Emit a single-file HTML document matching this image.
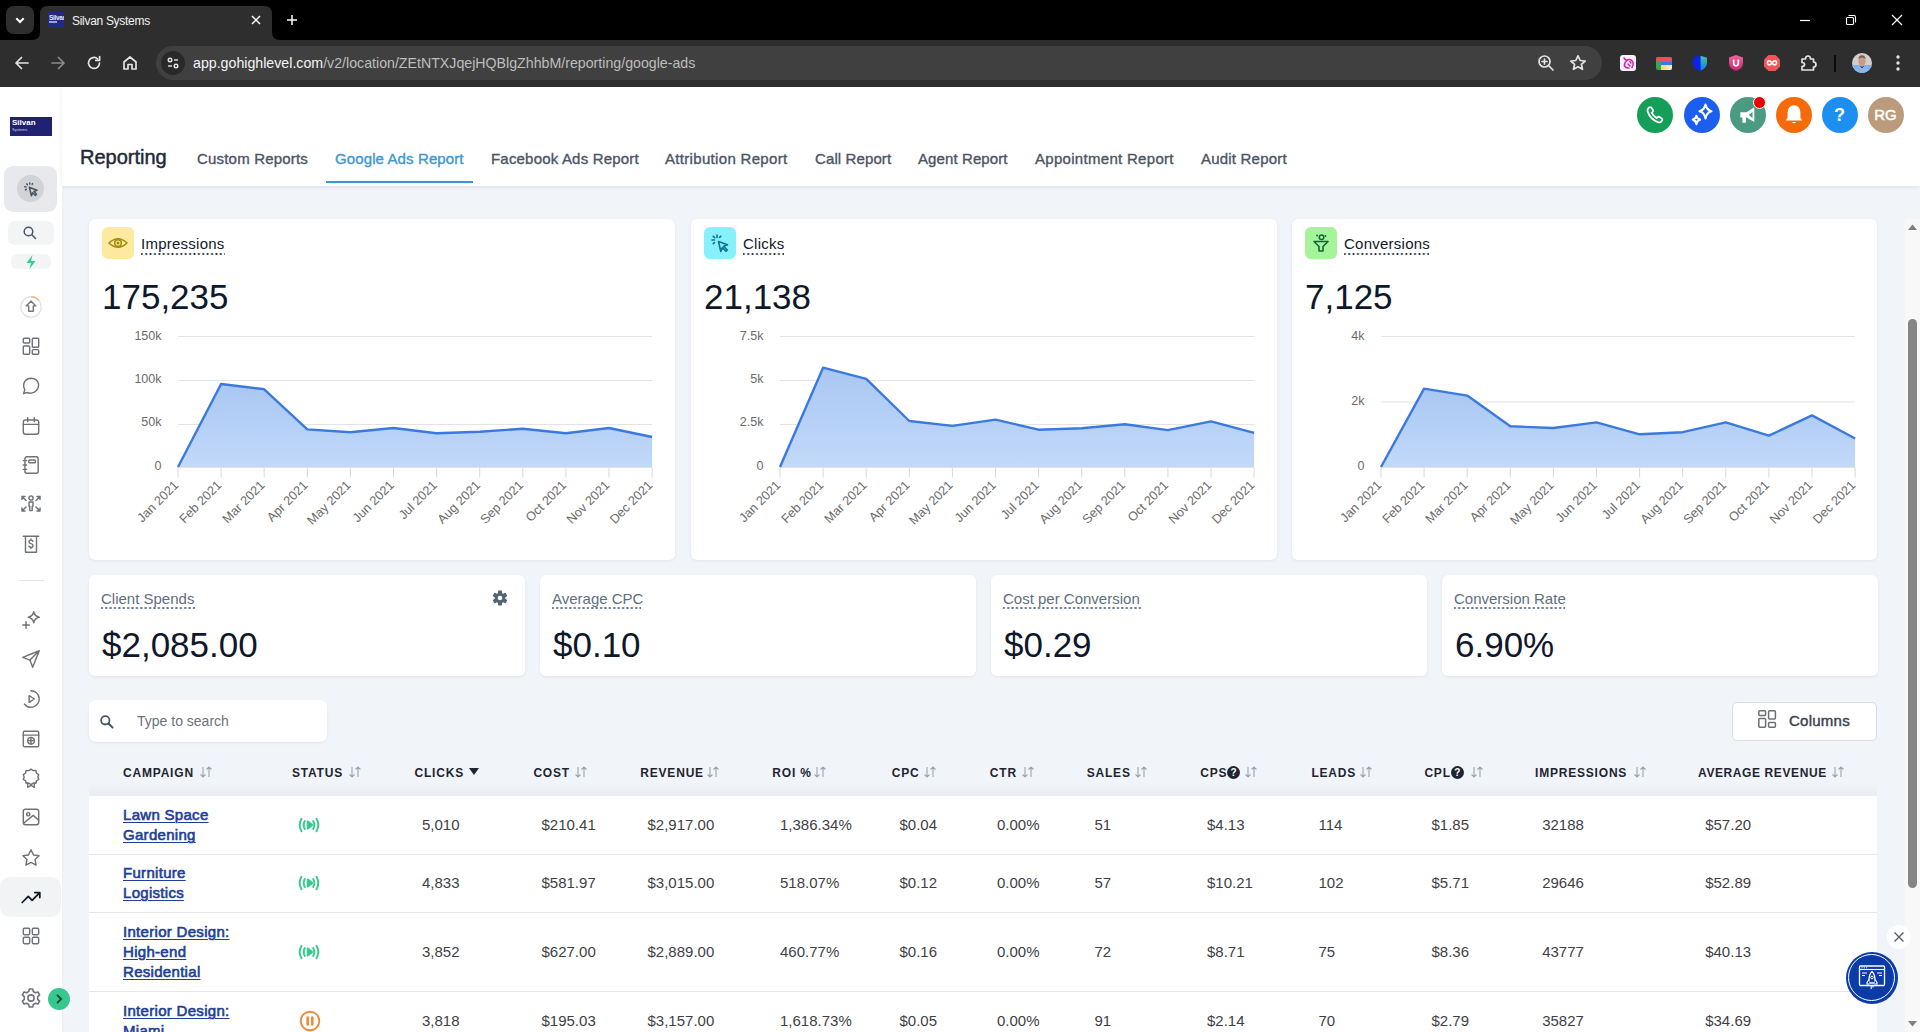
<!DOCTYPE html><html><head><meta charset="utf-8"><style>
*{box-sizing:border-box;margin:0;padding:0}
html,body{width:1920px;height:1032px;overflow:hidden;background:#f1f5f9;font-family:"Liberation Sans",sans-serif}
.a{position:absolute}
svg{display:block}
#tabs{position:absolute;left:0;top:0;width:1920px;height:40px;background:#000}
#toolbar{position:absolute;left:0;top:40px;width:1920px;height:47px;background:#2e2e2e;z-index:5}
#page{position:absolute;left:0;top:86px;width:1920px;height:946px;background:#f1f5f9;overflow:hidden}
#sidebar{position:absolute;left:0;top:0;width:63px;height:946px;background:#fff;border-right:1px solid #eef0f2}
#header{position:absolute;left:62px;top:0;width:1858px;height:100px;background:#fff;box-shadow:0 1px 4px rgba(0,0,0,.09)}
.tab{position:absolute;top:64px;font-size:15px;color:#4b5563;white-space:nowrap;line-height:18px;-webkit-text-stroke:.35px #4b5563}
.card{position:absolute;background:#fff;border-radius:6px;box-shadow:0 1px 3px rgba(16,24,40,.07)}
.ttl{position:absolute;font-size:15px;color:#111827;white-space:nowrap;line-height:18px;letter-spacing:.25px}
.dot{background-image:radial-gradient(circle,#1f2937 0 .9px,transparent 1.1px);background-size:4.4px 2px;background-position:-1.4px 0;background-repeat:repeat-x;height:2px;position:absolute}
.big{position:absolute;font-size:35px;color:#0f172a;white-space:nowrap;line-height:40px}
.hc{position:absolute;top:86px;width:36px;height:36px;border-radius:50%}
</style></head><body>
<div id="tabs">
<div class="a" style="left:6px;top:6px;width:28px;height:28px;border-radius:8px;background:#2e2e2e"></div>
<svg class="a" style="left:14px;top:14px" width="12" height="12"><path d="M2.3 4.3 L6 8 L9.7 4.3" stroke="#fff" stroke-width="2" fill="none"/></svg>
<svg class="a" style="left:32px;top:6px" width="248" height="34"><path d="M0 34 Q8 34 8 26 L8 8 Q8 0 16 0 L232 0 Q240 0 240 8 L240 26 Q240 34 248 34 Z" fill="#2e2e2e"/></svg>
<div class="a" style="left:48px;top:12px;width:16px;height:16px;background:#232a80;overflow:hidden"><div style="position:absolute;left:1px;top:2px;font-size:6.5px;font-weight:bold;color:#e8e9f5;line-height:7px;letter-spacing:-.3px">Silvan</div><div style="position:absolute;left:1px;top:9px;width:8px;height:2px;background:#9da2d6"></div></div>
<div class="a" style="left:72px;top:13px;font-size:12px;color:#f2f2f2;line-height:16px;letter-spacing:-.3px">Silvan Systems</div>
<svg class="a" style="left:250px;top:14px" width="12" height="12"><path d="M2 2 L10 10 M10 2 L2 10" stroke="#fff" stroke-width="1.5"/></svg>
<svg class="a" style="left:286px;top:14px" width="12" height="12"><path d="M6 1 V11 M1 6 H11" stroke="#fff" stroke-width="1.5"/></svg>
<svg class="a" style="left:1799px;top:14px" width="12" height="12"><path d="M1 6.5 H11" stroke="#fff" stroke-width="1.2"/></svg>
<svg class="a" style="left:1845px;top:14px" width="12" height="12"><rect x="1.5" y="3.5" width="7" height="7" rx="1" stroke="#fff" stroke-width="1.1" fill="none"/><path d="M3.5 1.5 H9 Q10.5 1.5 10.5 3 V8.5" stroke="#fff" stroke-width="1.1" fill="none"/></svg>
<svg class="a" style="left:1891px;top:14px" width="12" height="12"><path d="M1 1 L11 11 M11 1 L1 11" stroke="#fff" stroke-width="1.2"/></svg>
</div>
<div id="toolbar">
<svg class="a" style="left:12px;top:13px" width="20" height="20"><path d="M16 10 H4 M9.5 4.5 L4 10 L9.5 15.5" stroke="#e3e3e3" stroke-width="1.7" fill="none" stroke-linecap="round" stroke-linejoin="round"/></svg>
<svg class="a" style="left:48px;top:13px" width="20" height="20"><path d="M4 10 H16 M10.5 4.5 L16 10 L10.5 15.5" stroke="#8a8a8a" stroke-width="1.7" fill="none" stroke-linecap="round" stroke-linejoin="round"/></svg>
<svg class="a" style="left:84px;top:13px" width="20" height="20"><path d="M15.5 10 A5.5 5.5 0 1 1 13.6 5.8" stroke="#e3e3e3" stroke-width="1.7" fill="none" stroke-linecap="round" stroke-linejoin="round"/><path d="M15.6 3.6 V7.4 H11.8" stroke="#e3e3e3" stroke-width="1.7" fill="none" stroke-linecap="round" stroke-linejoin="round"/></svg>
<svg class="a" style="left:120px;top:13px" width="20" height="20"><path d="M4 9 L10 4 L16 9 V16 H12 V11.5 H8 V16 H4 Z" stroke="#e3e3e3" stroke-width="1.7" fill="none" stroke-linecap="round" stroke-linejoin="round"/></svg>
<div class="a" style="left:156px;top:6px;width:1446px;height:34px;border-radius:17px;background:#404040"></div>
<div class="a" style="left:161px;top:11px;width:24px;height:24px;border-radius:12px;background:#292929"></div>
<svg class="a" style="left:165px;top:15px" width="16" height="16"><circle cx="5" cy="5" r="1.8" stroke="#e3e3e3" stroke-width="1.4" fill="none"/><path d="M9 5 H13" stroke="#e3e3e3" stroke-width="1.4"/><circle cx="11" cy="11" r="1.8" stroke="#e3e3e3" stroke-width="1.4" fill="none"/><path d="M3 11 H7" stroke="#e3e3e3" stroke-width="1.4"/></svg>
<div class="a" style="left:193px;top:14px;font-size:14.2px;color:#f5f5f5;white-space:nowrap;line-height:18px">app.gohighlevel.com<span style="color:#bdbdbd">/v2/location/ZEtNTXJqejHQBlgZhhbM/reporting/google-ads</span></div>
<svg class="a" style="left:1536px;top:13px" width="20" height="20"><circle cx="8.5" cy="8.5" r="5.5" stroke="#e3e3e3" stroke-width="1.7" fill="none" stroke-linecap="round" stroke-linejoin="round"/><path d="M12.5 12.5 L17 17 M8.5 6 V11 M6 8.5 H11" stroke="#e3e3e3" stroke-width="1.7" fill="none" stroke-linecap="round" stroke-linejoin="round"/></svg>
<svg class="a" style="left:1568px;top:13px" width="20" height="20"><path d="M10 2.8 L12.2 7.5 L17.2 8 L13.4 11.3 L14.5 16.3 L10 13.7 L5.5 16.3 L6.6 11.3 L2.8 8 L7.8 7.5 Z" stroke="#e3e3e3" stroke-width="1.7" fill="none" stroke-linecap="round" stroke-linejoin="round"/></svg>
<div class="a" style="left:1620px;top:55px;"></div>
<div class="a" style="left:1620px;top:15px;width:16px;height:16px;border-radius:3px;background:#fbf0fb"></div>
<svg class="a" style="left:1620px;top:15px" width="16" height="16"><path d="M4 3 L6.5 6 Q4 8 4.5 11 Q6 13.5 9 13 M7 5 Q11 3.5 13 7 Q13.5 10 12 12.5 M8 9 L10 11 M10 6.5 L11 8" stroke="#d61fb4" stroke-width="1.5" fill="none" stroke-linecap="round"/></svg>
<div class="a" style="left:1656px;top:17px;width:16px;height:13px;border-radius:2px;overflow:hidden;background:#2fa85a"><div style="position:absolute;left:0;top:0;width:16px;height:4.5px;background:#e8505b"></div><div style="position:absolute;left:5px;top:4.5px;width:11px;height:3px;background:#3b78e7"></div><div style="position:absolute;left:5px;top:7.5px;width:11px;height:5.5px;background:linear-gradient(90deg,#f7d36b,#f2f0e6)"></div></div>
<svg class="a" style="left:1692px;top:14px" width="16" height="18"><defs><linearGradient id="shg" x1="0" y1="0" x2="0" y2="1"><stop offset="0" stop-color="#3fc99a"/><stop offset="1" stop-color="#1a7ae8"/></linearGradient></defs><path d="M8 1.5 L15 3.8 V9 Q15 14.5 8 17 Q1 14.5 1 9 V3.8 Z" fill="#0a22f0"/><path d="M8.6 1.7 L15 3.8 V9 Q15 14 8.6 16.7 Z" fill="url(#shg)"/></svg>
<svg class="a" style="left:1728px;top:14px" width="16" height="18"><defs><linearGradient id="ushg" x1="0" y1="0" x2="0" y2="1"><stop offset="0" stop-color="#e9659a"/><stop offset="1" stop-color="#d3246f"/></linearGradient></defs><path d="M8 1 L15 3.5 V9 Q15 14.5 8 17 Q1 14.5 1 9 V3.5 Z" fill="url(#ushg)"/><path d="M5.7 5.5 V9.6 Q5.7 11.8 8 11.8 Q10.3 11.8 10.3 9.6 V5.5" stroke="#fff" stroke-width="1.7" fill="none"/></svg>
<svg class="a" style="left:1763px;top:14px" width="18" height="18"><path d="M5.5 1 H12.5 L17 5.5 V12.5 L12.5 17 H5.5 L1 12.5 V5.5 Z" fill="#f05656"/><path d="M9 9 Q7 6.3 5.2 7 Q3.6 8 5.2 10.6 Q7 11.6 9 9 Q11 6.3 12.8 7 Q14.4 8 12.8 10.6 Q11 11.6 9 9" stroke="#fff" stroke-width="1.5" fill="none"/></svg>
<svg class="a" style="left:1798px;top:13px" width="20" height="20"><path d="M4 6 H7.5 Q7.5 3 10 3 Q12.5 3 12.5 6 H15.5 V9 Q18 9 18 11.5 Q18 14 15.5 14 V17 H4 V13.5 Q6.5 13.5 6.5 11.5 Q6.5 9.5 4 9.5 Z" stroke="#e3e3e3" stroke-width="1.7" fill="none" stroke-linecap="round" stroke-linejoin="round"/></svg>
<div class="a" style="left:1834px;top:15px;width:2px;height:17px;background:#0b0b0b"></div>
<svg class="a" style="left:1852px;top:13px" width="20" height="20"><defs><clipPath id="avc"><circle cx="10" cy="10" r="10"/></clipPath></defs><g clip-path="url(#avc)"><rect width="20" height="20" fill="#cfd0cc"/><rect y="12" width="20" height="8" fill="#84aee6"/><path d="M2 20 Q3 13 10 12.5 Q17 13 18 20 Z" fill="#8ab4ea"/><ellipse cx="10" cy="8.2" rx="3.6" ry="5" fill="#c99a84"/><path d="M6.4 6 Q6.6 2.3 10 2.2 Q13.4 2.3 13.6 6 Q12 4.2 10 4.4 Q8 4.2 6.4 6 Z" fill="#7a5a4a"/><path d="M8.5 13 L10 15 L11.5 13" stroke="#2a3e66" stroke-width="1" fill="none"/></g></svg>
<svg class="a" style="left:1894px;top:13px" width="8" height="20"><circle cx="4" cy="4" r="1.7" fill="#e3e3e3"/><circle cx="4" cy="10" r="1.7" fill="#e3e3e3"/><circle cx="4" cy="16" r="1.7" fill="#e3e3e3"/></svg>
</div>
<div id="page">
<div id="sidebar">
<div class="a" style="left:10px;top:31px;width:42px;height:19px;background:#1f2270"><div style="position:absolute;left:2px;top:1px;font-size:8px;font-weight:bold;color:#fff;line-height:9px">Silvan</div><div style="position:absolute;left:2px;top:10px;font-size:4px;color:#d0d3f0;line-height:5px">Systems</div></div>
<div class="a" style="left:4px;top:80px;width:53px;height:46px;border-radius:9px;background:#e8e9ec"></div>
<div class="a" style="left:17px;top:88.5px;width:27px;height:27px;border-radius:50%;background:#d2d3d6"></div>
<svg class="a" style="left:23px;top:94.5px" width="16" height="16"><path d="M6.3 6.3 L14 9.2 L10.9 10.5 L13.6 13.2 L12.3 14.5 L9.6 11.8 L8.4 14.8 Z" stroke="#4b5563" stroke-width="1.5" fill="none" stroke-linecap="round" stroke-linejoin="round" stroke-width="1.4" fill="#d2d3d6" stroke="#2e3440"/><path d="M3.8 2.8 L4.4 3.8 M1.8 5.8 L2.9 6 M2.4 8.9 L3.3 8.3 M6.8 1.9 L6.7 3 M9.5 2.6 L9.1 3.4" stroke="#4b5563" stroke-width="1.5" fill="none" stroke-linecap="round" stroke-linejoin="round" stroke-width="1.3" stroke="#2e3440"/></svg>
<div class="a" style="left:8px;top:135px;width:46px;height:24px;border-radius:7px;background:#f3f4f6"></div>
<svg class="a" style="left:22px;top:139px" width="16" height="16"><circle cx="6.5" cy="6.5" r="4.3" stroke="#4b5563" stroke-width="1.5" fill="none" stroke-linecap="round" stroke-linejoin="round" stroke-width="1.8" stroke="#374151"/><path d="M9.8 9.8 L13.5 13.5" stroke="#4b5563" stroke-width="1.5" fill="none" stroke-linecap="round" stroke-linejoin="round" stroke-width="2" stroke="#374151"/></svg>
<div class="a" style="left:11px;top:168px;width:40px;height:15px;border-radius:6px;background:#f3f4f6"></div>
<svg class="a" style="left:24px;top:168px" width="14" height="16"><path d="M8.5 1 L2.5 9 H7 L5.5 15 L11.5 7 H7 Z" fill="#2fcf8f"/></svg>
<svg class="a" style="left:19.5px;top:210.0px" width="22" height="22" viewBox="0 0 20 20"><circle cx="10" cy="10" r="9.3" stroke="#e2e3e5" stroke-width="1.2" fill="none"/><path d="M10 .7 A9.3 9.3 0 0 1 17.2 4.1" stroke="#f5b584" stroke-width="1.2" fill="none"/><path d="M10 4.5 L14.3 9 H12.1 V13.8 H7.9 V9 H5.7 Z" stroke="#777" stroke-width="1.3" fill="none" stroke-linejoin="round"/></svg>
<svg class="a" style="left:19.5px;top:249.0px" width="22" height="22" viewBox="0 0 20 20"><rect x="3" y="3" width="5.8" height="4.2" rx=".8" stroke="#6f7277" stroke-width="1.3" fill="none" stroke-linecap="round" stroke-linejoin="round"/><rect x="11.2" y="3" width="5.8" height="8.2" rx=".8" stroke="#6f7277" stroke-width="1.3" fill="none" stroke-linecap="round" stroke-linejoin="round"/><rect x="3" y="10" width="5.8" height="7.5" rx=".8" stroke="#6f7277" stroke-width="1.3" fill="none" stroke-linecap="round" stroke-linejoin="round"/><rect x="11.2" y="13.3" width="5.8" height="4.2" rx=".8" stroke="#6f7277" stroke-width="1.3" fill="none" stroke-linecap="round" stroke-linejoin="round"/></svg>
<svg class="a" style="left:19.5px;top:289.0px" width="22" height="22" viewBox="0 0 20 20"><path d="M3.2 17 L4.4 13.4 Q2.8 11 3.4 8.2 Q4.5 3.5 10 3 Q15.5 3 16.8 8 Q17.5 12.8 13 15.6 Q9.5 17.3 6.3 15.9 Z" stroke="#6f7277" stroke-width="1.3" fill="none" stroke-linecap="round" stroke-linejoin="round"/></svg>
<svg class="a" style="left:19.5px;top:329.0px" width="22" height="22" viewBox="0 0 20 20"><rect x="3" y="4.5" width="14" height="13" rx="2" stroke="#6f7277" stroke-width="1.3" fill="none" stroke-linecap="round" stroke-linejoin="round"/><path d="M3 8.5 H17 M7 2.5 V6 M13 2.5 V6" stroke="#6f7277" stroke-width="1.3" fill="none" stroke-linecap="round" stroke-linejoin="round"/></svg>
<svg class="a" style="left:19.5px;top:368.0px" width="22" height="22" viewBox="0 0 20 20"><rect x="4.5" y="2.5" width="12" height="15" rx="1.8" stroke="#6f7277" stroke-width="1.3" fill="none" stroke-linecap="round" stroke-linejoin="round"/><rect x="8" y="5.5" width="6" height="2.5" rx=".8" stroke="#6f7277" stroke-width="1.3" fill="none" stroke-linecap="round" stroke-linejoin="round"/><path d="M3 6 H6 M3 10 H6 M3 14 H6" stroke="#6f7277" stroke-width="1.3" fill="none" stroke-linecap="round" stroke-linejoin="round"/></svg>
<svg class="a" style="left:19.5px;top:407.0px" width="22" height="22" viewBox="0 0 20 20"><circle cx="10" cy="4.6" r="1.9" stroke="#6f7277" stroke-width="1.3" fill="none" stroke-linecap="round" stroke-linejoin="round"/><path d="M8.2 8.2 H11.8 V12 H11.1 V16 H8.9 V12 H8.2 Z" stroke="#6f7277" stroke-width="1.3" fill="none" stroke-linecap="round" stroke-linejoin="round"/><path d="M1.8 3.2 L5.5 6.8 M1.8 3.2 H4.6 M1.8 3.2 V6 M18.2 3.2 L14.5 6.8 M18.2 3.2 H15.4 M18.2 3.2 V6 M1.8 16.3 L5.5 12.7 M1.8 16.3 H4.6 M1.8 16.3 V13.5 M18.2 16.3 L14.5 12.7 M18.2 16.3 H15.4 M18.2 16.3 V13.5" stroke="#6f7277" stroke-width="1.3" fill="none" stroke-linecap="round" stroke-linejoin="round"/></svg>
<svg class="a" style="left:19.5px;top:447.0px" width="22" height="22" viewBox="0 0 20 20"><path d="M3 3 H17 M5 3 V17.5 H15 V3" stroke="#6f7277" stroke-width="1.3" fill="none" stroke-linecap="round" stroke-linejoin="round"/><path d="M11.8 7.5 Q11 6.5 10 6.5 Q8.2 6.5 8.2 8 Q8.2 9.3 10 9.7 Q11.8 10.2 11.8 11.5 Q11.8 13 10 13 Q8.8 13 8 12 M10 5.5 V6.5 M10 13 V14.2" stroke="#6f7277" stroke-width="1.3" fill="none" stroke-linecap="round" stroke-linejoin="round" stroke-width="1.2"/></svg>
<div class="a" style="left:18px;top:494px;width:26px;height:1px;background:#e5e7eb"></div>
<svg class="a" style="left:19.5px;top:523.0px" width="22" height="22" viewBox="0 0 20 20"><path d="M12.5 2.5 Q13.3 6.7 17.5 7.5 Q13.3 8.3 12.5 12.5 Q11.7 8.3 7.5 7.5 Q11.7 6.7 12.5 2.5 Z" stroke="#6f7277" stroke-width="1.3" fill="none" stroke-linecap="round" stroke-linejoin="round"/><path d="M5.5 11.5 V17.5 M2.5 14.5 H8.5" stroke="#6f7277" stroke-width="1.3" fill="none" stroke-linecap="round" stroke-linejoin="round"/></svg>
<svg class="a" style="left:19.5px;top:562.0px" width="22" height="22" viewBox="0 0 20 20"><path d="M17.5 2.5 L2.5 8.5 L9 11 L11.5 17.5 Z M17.5 2.5 L9 11" stroke="#6f7277" stroke-width="1.3" fill="none" stroke-linecap="round" stroke-linejoin="round"/></svg>
<svg class="a" style="left:19.5px;top:602.0px" width="22" height="22" viewBox="0 0 20 20"><path d="M10 2.5 A7.5 7.5 0 1 1 3.2 13.2" stroke="#6f7277" stroke-width="1.3" fill="none" stroke-linecap="round" stroke-linejoin="round" stroke-dasharray="30 2 2 2 2 2"/><path d="M8.3 7 L13 10 L8.3 13 Z" stroke="#6f7277" stroke-width="1.3" fill="none" stroke-linecap="round" stroke-linejoin="round"/></svg>
<svg class="a" style="left:19.5px;top:642.0px" width="22" height="22" viewBox="0 0 20 20"><rect x="3" y="3" width="14" height="14" rx="1" stroke="#6f7277" stroke-width="1.3" fill="none" stroke-linecap="round" stroke-linejoin="round"/><path d="M3 6.5 H17" stroke="#6f7277" stroke-width="1.3" fill="none" stroke-linecap="round" stroke-linejoin="round"/><circle cx="10" cy="11.5" r="3" stroke="#6f7277" stroke-width="1.3" fill="none" stroke-linecap="round" stroke-linejoin="round" stroke-width="1.2"/><path d="M7 11.5 H13 M10 8.5 V14.5" stroke="#6f7277" stroke-width="1.3" fill="none" stroke-linecap="round" stroke-linejoin="round" stroke-width="1"/></svg>
<svg class="a" style="left:19.5px;top:681.0px" width="22" height="22" viewBox="0 0 20 20"><path d="M10 2 L12 3.3 L14.4 3.2 L15 5.5 L17 6.8 L16.2 9 L17 11.2 L15 12.5 L14.4 14.8 L12 14.7 L10 16 L8 14.7 L5.6 14.8 L5 12.5 L3 11.2 L3.8 9 L3 6.8 L5 5.5 L5.6 3.2 L8 3.3 Z" stroke="#6f7277" stroke-width="1.3" fill="none" stroke-linecap="round" stroke-linejoin="round" stroke-width="1.3"/><path d="M7 14.5 V18.5 L10 16.8 L13 18.5 V14.5" stroke="#6f7277" stroke-width="1.3" fill="none" stroke-linecap="round" stroke-linejoin="round" stroke-width="1.3"/></svg>
<svg class="a" style="left:19.5px;top:720.0px" width="22" height="22" viewBox="0 0 20 20"><rect x="3" y="3" width="14" height="14" rx="2" stroke="#6f7277" stroke-width="1.3" fill="none" stroke-linecap="round" stroke-linejoin="round"/><circle cx="7.5" cy="7.5" r="1.5" stroke="#6f7277" stroke-width="1.3" fill="none" stroke-linecap="round" stroke-linejoin="round"/><path d="M3.5 15.5 L12 8.5 L17 13" stroke="#6f7277" stroke-width="1.3" fill="none" stroke-linecap="round" stroke-linejoin="round"/></svg>
<svg class="a" style="left:19.5px;top:761.0px" width="22" height="22" viewBox="0 0 20 20"><path d="M10 2.5 L12.3 7.2 L17.3 7.9 L13.7 11.4 L14.6 16.5 L10 14 L5.4 16.5 L6.3 11.4 L2.7 7.9 L7.7 7.2 Z" stroke="#6f7277" stroke-width="1.3" fill="none" stroke-linecap="round" stroke-linejoin="round"/></svg>
<div class="a" style="left:0;top:791px;width:61px;height:40px;border-radius:10px;background:#f2f3f5"></div>
<svg class="a" style="left:19.5px;top:799.5px" width="22" height="22" viewBox="0 0 20 20"><path d="M2 15 L7.5 9.5 L11 13 L18 6 M13.5 6 H18 V10.5" stroke="#111827" stroke-width="1.6" fill="none" stroke-linecap="round" stroke-linejoin="round"/></svg>
<svg class="a" style="left:19.5px;top:839.0px" width="22" height="22" viewBox="0 0 20 20"><rect x="3" y="3" width="5.8" height="5.8" rx="1" stroke="#6f7277" stroke-width="1.3" fill="none" stroke-linecap="round" stroke-linejoin="round"/><rect x="11.2" y="3" width="5.8" height="5.8" rx="1" stroke="#6f7277" stroke-width="1.3" fill="none" stroke-linecap="round" stroke-linejoin="round"/><rect x="3" y="11.2" width="5.8" height="5.8" rx="1" stroke="#6f7277" stroke-width="1.3" fill="none" stroke-linecap="round" stroke-linejoin="round"/><rect x="11.2" y="11.2" width="5.8" height="5.8" rx="1" stroke="#6f7277" stroke-width="1.3" fill="none" stroke-linecap="round" stroke-linejoin="round"/></svg>
<svg class="a" style="left:18.5px;top:899.5px" width="24" height="24" viewBox="0 0 20 20"><circle cx="10" cy="10" r="2.6" stroke="#6f7277" stroke-width="1.3" fill="none" stroke-linecap="round" stroke-linejoin="round"/><path d="M8.6 2.5 H11.4 L11.9 4.6 L13.7 5.6 L15.8 5 L17.2 7.4 L15.6 8.9 V11.1 L17.2 12.6 L15.8 15 L13.7 14.4 L11.9 15.4 L11.4 17.5 H8.6 L8.1 15.4 L6.3 14.4 L4.2 15 L2.8 12.6 L4.4 11.1 V8.9 L2.8 7.4 L4.2 5 L6.3 5.6 L8.1 4.6 Z" stroke="#6f7277" stroke-width="1.3" fill="none" stroke-linecap="round" stroke-linejoin="round" stroke-width="1.2"/></svg>
</div>
<div class="a" style="left:48.3px;top:901.7px;width:22px;height:22px;border-radius:50%;background:#38c78e"></div>
<svg class="a" style="left:53.3px;top:906.7px" width="12" height="12"><path d="M4.5 2.3 L8.2 6 L4.5 9.7" stroke="#0d4a30" stroke-width="1.8" fill="none" stroke-linecap="round"/></svg>
<div id="header">
<div class="a" style="left:18px;top:59px;font-size:20px;color:#1f2937;line-height:24px;-webkit-text-stroke:.45px #1f2937">Reporting</div>
<div class="tab" style="left:135px;letter-spacing:0.19px">Custom Reports</div>
<div class="tab" style="left:273px;letter-spacing:0.11px;color:#3a97d4;-webkit-text-stroke:.35px #3a97d4">Google Ads Report</div>
<div class="tab" style="left:429px;letter-spacing:0.19px">Facebook Ads Report</div>
<div class="tab" style="left:603px;letter-spacing:0.32px">Attribution Report</div>
<div class="tab" style="left:753px;letter-spacing:0.11px">Call Report</div>
<div class="tab" style="left:856px;letter-spacing:0.1px">Agent Report</div>
<div class="tab" style="left:973px;letter-spacing:0.3px">Appointment Report</div>
<div class="tab" style="left:1139px;letter-spacing:0.2px">Audit Report</div>
<div class="a" style="left:264px;top:95px;width:147px;height:2px;background:#3a97d4"></div>
</div>
<div class="a" style="left:1637px;top:10.5px;width:36px;height:36px;border-radius:50%;background:#159e57"><svg class="a" style="left:6px;top:6px" width="24" height="24" viewBox="0 0 20 20"><path d="M5.2 3.8 Q6.3 3 7 3.9 L8.3 5.9 Q8.7 6.7 8 7.4 L7.2 8.1 Q8.4 10.8 11.4 12.6 L12.2 11.8 Q12.9 11.2 13.7 11.7 L15.7 13 Q16.5 13.6 15.9 14.6 L15.2 15.5 Q14.2 16.6 12.4 16 Q6.2 13.6 3.9 7.2 Q3.4 5.4 4.4 4.4 Z" stroke="#fff" stroke-width="1.5" fill="none" stroke-linecap="round" stroke-linejoin="round" stroke-width="1.1"/></svg></div>
<div class="a" style="left:1683.5px;top:10.5px;width:36px;height:36px;border-radius:50%;background:#1b5ef0"><svg class="a" style="left:4px;top:4px" width="28" height="28" viewBox="0 0 20 20"><path d="M12.5 2.5 Q13.2 6.3 16.8 7.3 Q13.2 8.3 12.5 12.5 Q11.8 8.3 8.2 7.3 Q11.8 6.3 12.5 2.5 Z" stroke="#fff" stroke-width="1.5" fill="none" stroke-linecap="round" stroke-linejoin="round" stroke-width="1.2"/><path d="M6 10.5 Q6.4 12.7 8.6 13.3 Q6.4 13.9 6 16.5 Q5.6 13.9 3.4 13.3 Q5.6 12.7 6 10.5 Z" stroke="#fff" stroke-width="1.5" fill="none" stroke-linecap="round" stroke-linejoin="round" stroke-width="1.2"/></svg></div>
<div class="a" style="left:1729.5px;top:10.5px;width:36px;height:36px;border-radius:50%;background:#4a9b82"><svg class="a" style="left:4.5px;top:4px" width="28" height="28" viewBox="0 0 20 20"><path d="M4.5 8 H9 L14.5 4.5 V15 L9 11.8 H8.5 V15.5 H6 V11.8 H4.5 Z" fill="#fff"/><path d="M10.5 9.8 L13.2 7.8 V12.3 Z" fill="#4a9b82"/></svg></div>
<div class="a" style="left:1753px;top:10px;width:13px;height:13px;border-radius:50%;background:#ee0000;border:1px solid #fff"></div>
<div class="a" style="left:1775.5px;top:10.5px;width:36px;height:36px;border-radius:50%;background:#f66a0b"><svg class="a" style="left:4px;top:4px" width="28" height="28" viewBox="0 0 20 20"><path d="M10 3 Q14.3 3.2 14.6 8 V12 L16 14 H4 L5.4 12 V8 Q5.7 3.2 10 3 Z" fill="#fff"/><path d="M8.6 15 H11.4 Q10 16.8 8.6 15 Z" fill="#fff"/></svg></div>
<div class="a" style="left:1821.5px;top:10.5px;width:36px;height:36px;border-radius:50%;background:#1d8ff0"><div style="position:absolute;left:0;top:8px;width:36px;text-align:center;font-size:18px;font-weight:bold;color:#fff;line-height:20px">?</div></div>
<div class="a" style="left:1867.5px;top:10.5px;width:36px;height:36px;border-radius:50%;background:#bc9b7d"><div style="position:absolute;left:0;top:10px;width:36px;text-align:center;font-size:15px;color:#fff;line-height:16px;-webkit-text-stroke:.5px #fff">RG</div></div>
<div class="card" style="left:89px;top:133px;width:586px;height:341px">
<div class="a" style="left:13px;top:8px;width:32px;height:32px;border-radius:6px;background:#fdeaa0"><svg class="a" style="left:4px;top:4px" width="24" height="24" viewBox="0 0 24 24"><path d="M3 12 Q12 3.5 21 12 Q12 20.5 3 12 Z" stroke="#a58b0e" stroke-width="1.6" fill="none"/><circle cx="12" cy="12" r="3.3" stroke="#a58b0e" stroke-width="1.5" fill="none"/><circle cx="12" cy="12" r="1.5" fill="#a58b0e"/></svg></div>
<div class="ttl" style="left:52px;top:16px">Impressions</div>
<div class="dot" style="left:52px;top:34px;width:84px"></div>
<div class="big" style="left:13px;top:58px">175,235</div>
<svg class="a" style="left:0;top:0" width="586" height="341"><defs><linearGradient id="geye" x1="0" y1="0" x2="0" y2="1"><stop offset="0" stop-color="#a9c7f3"/><stop offset="1" stop-color="#c2d9f9"/></linearGradient></defs><line x1="89" x2="563.1" y1="117.5" y2="117.5" stroke="#e3e3e3" stroke-width="1"/><text x="72.5" y="120.9" text-anchor="end" font-size="12.5" fill="#6b6b6b" font-family="Liberation Sans">150k</text><line x1="89" x2="563.1" y1="161.5" y2="161.5" stroke="#e3e3e3" stroke-width="1"/><text x="72.5" y="164.2" text-anchor="end" font-size="12.5" fill="#6b6b6b" font-family="Liberation Sans">100k</text><line x1="89" x2="563.1" y1="205.5" y2="205.5" stroke="#e3e3e3" stroke-width="1"/><text x="72.5" y="207.2" text-anchor="end" font-size="12.5" fill="#6b6b6b" font-family="Liberation Sans">50k</text><line x1="89" x2="563.1" y1="248.5" y2="248.5" stroke="#e3e3e3" stroke-width="1"/><text x="72.5" y="250.8" text-anchor="end" font-size="12.5" fill="#6b6b6b" font-family="Liberation Sans">0</text><polygon points="89,248 89.0,248 132.1,165 175.2,170.3 218.3,210.4 261.4,213.2 304.5,209 347.6,214.2 390.7,212.8 433.8,209.7 476.9,214.2 520.0,209 563.1,218 563.1,248" fill="url(#geye)"/><polyline points="89.0,248 132.1,165 175.2,170.3 218.3,210.4 261.4,213.2 304.5,209 347.6,214.2 390.7,212.8 433.8,209.7 476.9,214.2 520.0,209 563.1,218" stroke="#3a7ade" stroke-width="2.4" fill="none" stroke-linejoin="round"/><line x1="89.0" x2="89.0" y1="248.5" y2="258.5" stroke="#d9d9d9" stroke-width="1"/><text transform="translate(90.2,267) rotate(-45)" text-anchor="end" font-size="12.7" fill="#6b6b6b" font-family="Liberation Sans">Jan 2021</text><line x1="132.1" x2="132.1" y1="248.5" y2="258.5" stroke="#d9d9d9" stroke-width="1"/><text transform="translate(133.3,267) rotate(-45)" text-anchor="end" font-size="12.7" fill="#6b6b6b" font-family="Liberation Sans">Feb 2021</text><line x1="175.2" x2="175.2" y1="248.5" y2="258.5" stroke="#d9d9d9" stroke-width="1"/><text transform="translate(176.4,267) rotate(-45)" text-anchor="end" font-size="12.7" fill="#6b6b6b" font-family="Liberation Sans">Mar 2021</text><line x1="218.3" x2="218.3" y1="248.5" y2="258.5" stroke="#d9d9d9" stroke-width="1"/><text transform="translate(219.5,267) rotate(-45)" text-anchor="end" font-size="12.7" fill="#6b6b6b" font-family="Liberation Sans">Apr 2021</text><line x1="261.4" x2="261.4" y1="248.5" y2="258.5" stroke="#d9d9d9" stroke-width="1"/><text transform="translate(262.6,267) rotate(-45)" text-anchor="end" font-size="12.7" fill="#6b6b6b" font-family="Liberation Sans">May 2021</text><line x1="304.5" x2="304.5" y1="248.5" y2="258.5" stroke="#d9d9d9" stroke-width="1"/><text transform="translate(305.7,267) rotate(-45)" text-anchor="end" font-size="12.7" fill="#6b6b6b" font-family="Liberation Sans">Jun 2021</text><line x1="347.6" x2="347.6" y1="248.5" y2="258.5" stroke="#d9d9d9" stroke-width="1"/><text transform="translate(348.8,267) rotate(-45)" text-anchor="end" font-size="12.7" fill="#6b6b6b" font-family="Liberation Sans">Jul 2021</text><line x1="390.7" x2="390.7" y1="248.5" y2="258.5" stroke="#d9d9d9" stroke-width="1"/><text transform="translate(391.9,267) rotate(-45)" text-anchor="end" font-size="12.7" fill="#6b6b6b" font-family="Liberation Sans">Aug 2021</text><line x1="433.8" x2="433.8" y1="248.5" y2="258.5" stroke="#d9d9d9" stroke-width="1"/><text transform="translate(435.0,267) rotate(-45)" text-anchor="end" font-size="12.7" fill="#6b6b6b" font-family="Liberation Sans">Sep 2021</text><line x1="476.9" x2="476.9" y1="248.5" y2="258.5" stroke="#d9d9d9" stroke-width="1"/><text transform="translate(478.1,267) rotate(-45)" text-anchor="end" font-size="12.7" fill="#6b6b6b" font-family="Liberation Sans">Oct 2021</text><line x1="520.0" x2="520.0" y1="248.5" y2="258.5" stroke="#d9d9d9" stroke-width="1"/><text transform="translate(521.2,267) rotate(-45)" text-anchor="end" font-size="12.7" fill="#6b6b6b" font-family="Liberation Sans">Nov 2021</text><line x1="563.1" x2="563.1" y1="248.5" y2="258.5" stroke="#d9d9d9" stroke-width="1"/><text transform="translate(564.3,267) rotate(-45)" text-anchor="end" font-size="12.7" fill="#6b6b6b" font-family="Liberation Sans">Dec 2021</text></svg>
</div>
<div class="card" style="left:691px;top:133px;width:586px;height:341px">
<div class="a" style="left:13px;top:8px;width:32px;height:32px;border-radius:6px;background:#86f0fb"><svg class="a" style="left:4px;top:4px" width="24" height="24" viewBox="0 0 24 24"><path d="M10.5 10.5 L19.5 13.8 L15.6 15.3 L19.3 19 L18 20.3 L14.3 16.6 L12.8 20.5 Z" stroke="#0e7490" stroke-width="1.6" fill="none" stroke-linejoin="round"/><path d="M9 4 V6.5 M4 9 H6.5 M5.2 5.2 L6.8 6.8 M12.8 5.2 L11.6 6.4 M5.2 12.8 L6.4 11.6" stroke="#0e7490" stroke-width="1.6" stroke-linecap="round"/></svg></div>
<div class="ttl" style="left:52px;top:16px">Clicks</div>
<div class="dot" style="left:52px;top:34px;width:41px"></div>
<div class="big" style="left:13px;top:58px">21,138</div>
<svg class="a" style="left:0;top:0" width="586" height="341"><defs><linearGradient id="gclick" x1="0" y1="0" x2="0" y2="1"><stop offset="0" stop-color="#a9c7f3"/><stop offset="1" stop-color="#c2d9f9"/></linearGradient></defs><line x1="89" x2="563.1" y1="117.5" y2="117.5" stroke="#e3e3e3" stroke-width="1"/><text x="72.5" y="120.9" text-anchor="end" font-size="12.5" fill="#6b6b6b" font-family="Liberation Sans">7.5k</text><line x1="89" x2="563.1" y1="161.5" y2="161.5" stroke="#e3e3e3" stroke-width="1"/><text x="72.5" y="164.2" text-anchor="end" font-size="12.5" fill="#6b6b6b" font-family="Liberation Sans">5k</text><line x1="89" x2="563.1" y1="205.5" y2="205.5" stroke="#e3e3e3" stroke-width="1"/><text x="72.5" y="207.2" text-anchor="end" font-size="12.5" fill="#6b6b6b" font-family="Liberation Sans">2.5k</text><line x1="89" x2="563.1" y1="248.5" y2="248.5" stroke="#e3e3e3" stroke-width="1"/><text x="72.5" y="250.8" text-anchor="end" font-size="12.5" fill="#6b6b6b" font-family="Liberation Sans">0</text><polygon points="89,248 89.0,248 132.1,148.7 175.2,159.8 218.3,202 261.4,206.9 304.5,200.6 347.6,210.7 390.7,209.3 433.8,205.2 476.9,211.1 520.0,202.4 563.1,213.9 563.1,248" fill="url(#gclick)"/><polyline points="89.0,248 132.1,148.7 175.2,159.8 218.3,202 261.4,206.9 304.5,200.6 347.6,210.7 390.7,209.3 433.8,205.2 476.9,211.1 520.0,202.4 563.1,213.9" stroke="#3a7ade" stroke-width="2.4" fill="none" stroke-linejoin="round"/><line x1="89.0" x2="89.0" y1="248.5" y2="258.5" stroke="#d9d9d9" stroke-width="1"/><text transform="translate(90.2,267) rotate(-45)" text-anchor="end" font-size="12.7" fill="#6b6b6b" font-family="Liberation Sans">Jan 2021</text><line x1="132.1" x2="132.1" y1="248.5" y2="258.5" stroke="#d9d9d9" stroke-width="1"/><text transform="translate(133.3,267) rotate(-45)" text-anchor="end" font-size="12.7" fill="#6b6b6b" font-family="Liberation Sans">Feb 2021</text><line x1="175.2" x2="175.2" y1="248.5" y2="258.5" stroke="#d9d9d9" stroke-width="1"/><text transform="translate(176.4,267) rotate(-45)" text-anchor="end" font-size="12.7" fill="#6b6b6b" font-family="Liberation Sans">Mar 2021</text><line x1="218.3" x2="218.3" y1="248.5" y2="258.5" stroke="#d9d9d9" stroke-width="1"/><text transform="translate(219.5,267) rotate(-45)" text-anchor="end" font-size="12.7" fill="#6b6b6b" font-family="Liberation Sans">Apr 2021</text><line x1="261.4" x2="261.4" y1="248.5" y2="258.5" stroke="#d9d9d9" stroke-width="1"/><text transform="translate(262.6,267) rotate(-45)" text-anchor="end" font-size="12.7" fill="#6b6b6b" font-family="Liberation Sans">May 2021</text><line x1="304.5" x2="304.5" y1="248.5" y2="258.5" stroke="#d9d9d9" stroke-width="1"/><text transform="translate(305.7,267) rotate(-45)" text-anchor="end" font-size="12.7" fill="#6b6b6b" font-family="Liberation Sans">Jun 2021</text><line x1="347.6" x2="347.6" y1="248.5" y2="258.5" stroke="#d9d9d9" stroke-width="1"/><text transform="translate(348.8,267) rotate(-45)" text-anchor="end" font-size="12.7" fill="#6b6b6b" font-family="Liberation Sans">Jul 2021</text><line x1="390.7" x2="390.7" y1="248.5" y2="258.5" stroke="#d9d9d9" stroke-width="1"/><text transform="translate(391.9,267) rotate(-45)" text-anchor="end" font-size="12.7" fill="#6b6b6b" font-family="Liberation Sans">Aug 2021</text><line x1="433.8" x2="433.8" y1="248.5" y2="258.5" stroke="#d9d9d9" stroke-width="1"/><text transform="translate(435.0,267) rotate(-45)" text-anchor="end" font-size="12.7" fill="#6b6b6b" font-family="Liberation Sans">Sep 2021</text><line x1="476.9" x2="476.9" y1="248.5" y2="258.5" stroke="#d9d9d9" stroke-width="1"/><text transform="translate(478.1,267) rotate(-45)" text-anchor="end" font-size="12.7" fill="#6b6b6b" font-family="Liberation Sans">Oct 2021</text><line x1="520.0" x2="520.0" y1="248.5" y2="258.5" stroke="#d9d9d9" stroke-width="1"/><text transform="translate(521.2,267) rotate(-45)" text-anchor="end" font-size="12.7" fill="#6b6b6b" font-family="Liberation Sans">Nov 2021</text><line x1="563.1" x2="563.1" y1="248.5" y2="258.5" stroke="#d9d9d9" stroke-width="1"/><text transform="translate(564.3,267) rotate(-45)" text-anchor="end" font-size="12.7" fill="#6b6b6b" font-family="Liberation Sans">Dec 2021</text></svg>
</div>
<div class="card" style="left:1292px;top:133px;width:585px;height:341px">
<div class="a" style="left:13px;top:8px;width:32px;height:32px;border-radius:6px;background:#a5f49a"><svg class="a" style="left:4px;top:4px" width="24" height="24" viewBox="0 0 24 24"><path d="M5 10.5 H19 L14 15.5 V20 H10 V15.5 Z" stroke="#166534" stroke-width="1.6" fill="none" stroke-linejoin="round"/><circle cx="12.5" cy="6.2" r="2.3" stroke="#166534" stroke-width="1.5" fill="none"/><circle cx="8" cy="4.5" r=".9" fill="#166534"/><circle cx="16.5" cy="5" r=".9" fill="#166534"/></svg></div>
<div class="ttl" style="left:52px;top:16px">Conversions</div>
<div class="dot" style="left:52px;top:34px;width:85px"></div>
<div class="big" style="left:13px;top:58px">7,125</div>
<svg class="a" style="left:0;top:0" width="585" height="341"><defs><linearGradient id="gfunnel" x1="0" y1="0" x2="0" y2="1"><stop offset="0" stop-color="#a9c7f3"/><stop offset="1" stop-color="#c2d9f9"/></linearGradient></defs><line x1="89" x2="563.1" y1="117.5" y2="117.5" stroke="#e3e3e3" stroke-width="1"/><text x="72.5" y="121.1" text-anchor="end" font-size="12.5" fill="#6b6b6b" font-family="Liberation Sans">4k</text><line x1="89" x2="563.1" y1="183" y2="183" stroke="#e3e3e3" stroke-width="1"/><text x="72.5" y="186.4" text-anchor="end" font-size="12.5" fill="#6b6b6b" font-family="Liberation Sans">2k</text><line x1="89" x2="563.1" y1="248.5" y2="248.5" stroke="#e3e3e3" stroke-width="1"/><text x="72.5" y="250.8" text-anchor="end" font-size="12.5" fill="#6b6b6b" font-family="Liberation Sans">0</text><polygon points="89,248 89.0,248 132.1,169.6 175.2,176.6 218.3,207.3 261.4,209 304.5,203.4 347.6,215.3 390.7,213.2 433.8,203.4 476.9,216.7 520.0,196.4 563.1,219.5 563.1,248" fill="url(#gfunnel)"/><polyline points="89.0,248 132.1,169.6 175.2,176.6 218.3,207.3 261.4,209 304.5,203.4 347.6,215.3 390.7,213.2 433.8,203.4 476.9,216.7 520.0,196.4 563.1,219.5" stroke="#3a7ade" stroke-width="2.4" fill="none" stroke-linejoin="round"/><line x1="89.0" x2="89.0" y1="248.5" y2="258.5" stroke="#d9d9d9" stroke-width="1"/><text transform="translate(90.2,267) rotate(-45)" text-anchor="end" font-size="12.7" fill="#6b6b6b" font-family="Liberation Sans">Jan 2021</text><line x1="132.1" x2="132.1" y1="248.5" y2="258.5" stroke="#d9d9d9" stroke-width="1"/><text transform="translate(133.3,267) rotate(-45)" text-anchor="end" font-size="12.7" fill="#6b6b6b" font-family="Liberation Sans">Feb 2021</text><line x1="175.2" x2="175.2" y1="248.5" y2="258.5" stroke="#d9d9d9" stroke-width="1"/><text transform="translate(176.4,267) rotate(-45)" text-anchor="end" font-size="12.7" fill="#6b6b6b" font-family="Liberation Sans">Mar 2021</text><line x1="218.3" x2="218.3" y1="248.5" y2="258.5" stroke="#d9d9d9" stroke-width="1"/><text transform="translate(219.5,267) rotate(-45)" text-anchor="end" font-size="12.7" fill="#6b6b6b" font-family="Liberation Sans">Apr 2021</text><line x1="261.4" x2="261.4" y1="248.5" y2="258.5" stroke="#d9d9d9" stroke-width="1"/><text transform="translate(262.6,267) rotate(-45)" text-anchor="end" font-size="12.7" fill="#6b6b6b" font-family="Liberation Sans">May 2021</text><line x1="304.5" x2="304.5" y1="248.5" y2="258.5" stroke="#d9d9d9" stroke-width="1"/><text transform="translate(305.7,267) rotate(-45)" text-anchor="end" font-size="12.7" fill="#6b6b6b" font-family="Liberation Sans">Jun 2021</text><line x1="347.6" x2="347.6" y1="248.5" y2="258.5" stroke="#d9d9d9" stroke-width="1"/><text transform="translate(348.8,267) rotate(-45)" text-anchor="end" font-size="12.7" fill="#6b6b6b" font-family="Liberation Sans">Jul 2021</text><line x1="390.7" x2="390.7" y1="248.5" y2="258.5" stroke="#d9d9d9" stroke-width="1"/><text transform="translate(391.9,267) rotate(-45)" text-anchor="end" font-size="12.7" fill="#6b6b6b" font-family="Liberation Sans">Aug 2021</text><line x1="433.8" x2="433.8" y1="248.5" y2="258.5" stroke="#d9d9d9" stroke-width="1"/><text transform="translate(435.0,267) rotate(-45)" text-anchor="end" font-size="12.7" fill="#6b6b6b" font-family="Liberation Sans">Sep 2021</text><line x1="476.9" x2="476.9" y1="248.5" y2="258.5" stroke="#d9d9d9" stroke-width="1"/><text transform="translate(478.1,267) rotate(-45)" text-anchor="end" font-size="12.7" fill="#6b6b6b" font-family="Liberation Sans">Oct 2021</text><line x1="520.0" x2="520.0" y1="248.5" y2="258.5" stroke="#d9d9d9" stroke-width="1"/><text transform="translate(521.2,267) rotate(-45)" text-anchor="end" font-size="12.7" fill="#6b6b6b" font-family="Liberation Sans">Nov 2021</text><line x1="563.1" x2="563.1" y1="248.5" y2="258.5" stroke="#d9d9d9" stroke-width="1"/><text transform="translate(564.3,267) rotate(-45)" text-anchor="end" font-size="12.7" fill="#6b6b6b" font-family="Liberation Sans">Dec 2021</text></svg>
</div>
<div class="card" style="left:89px;top:489px;width:435.5px;height:101px">
<div class="ttl" style="left:12px;top:14.5px;color:#5f6f80;letter-spacing:0">Client Spends</div>
<div class="dot" style="left:12px;top:32px;width:94px;background-image:radial-gradient(circle,#66768a 0 .95px,transparent 1.15px)"></div>
<div class="big" style="left:13px;top:50px">$2,085.00</div>
<svg class="a" style="left:403px;top:15px" width="16" height="16" viewBox="0 0 16 16"><g fill="#546474"><circle cx="8" cy="8" r="5.3"/><rect x="6" y=".6" width="4" height="4" rx=".6" transform="rotate(0 8 8)"/><rect x="6" y=".6" width="4" height="4" rx=".6" transform="rotate(60 8 8)"/><rect x="6" y=".6" width="4" height="4" rx=".6" transform="rotate(120 8 8)"/><rect x="6" y=".6" width="4" height="4" rx=".6" transform="rotate(180 8 8)"/><rect x="6" y=".6" width="4" height="4" rx=".6" transform="rotate(240 8 8)"/><rect x="6" y=".6" width="4" height="4" rx=".6" transform="rotate(300 8 8)"/></g><circle cx="8" cy="8" r="2.3" fill="#fff"/></svg>
</div>
<div class="card" style="left:540px;top:489px;width:435.5px;height:101px">
<div class="ttl" style="left:12px;top:14.5px;color:#5f6f80;letter-spacing:0">Average CPC</div>
<div class="dot" style="left:12px;top:32px;width:89px;background-image:radial-gradient(circle,#66768a 0 .95px,transparent 1.15px)"></div>
<div class="big" style="left:13px;top:50px">$0.10</div>
</div>
<div class="card" style="left:991px;top:489px;width:435.5px;height:101px">
<div class="ttl" style="left:12px;top:14.5px;color:#5f6f80;letter-spacing:0">Cost per Conversion</div>
<div class="dot" style="left:12px;top:32px;width:138px;background-image:radial-gradient(circle,#66768a 0 .95px,transparent 1.15px)"></div>
<div class="big" style="left:13px;top:50px">$0.29</div>
</div>
<div class="card" style="left:1442px;top:489px;width:435.5px;height:101px">
<div class="ttl" style="left:12px;top:14.5px;color:#5f6f80;letter-spacing:0">Conversion Rate</div>
<div class="dot" style="left:12px;top:32px;width:111px;background-image:radial-gradient(circle,#66768a 0 .95px,transparent 1.15px)"></div>
<div class="big" style="left:13px;top:50px">6.90%</div>
</div>
<div class="card" style="left:89px;top:614px;width:238px;height:42px;border-radius:7px"></div>
<svg class="a" style="left:99px;top:628px" width="16" height="16"><circle cx="6.3" cy="6.3" r="4.2" stroke="#4b5563" stroke-width="1.8" fill="none"/><path d="M9.5 9.5 L13.5 13.5" stroke="#4b5563" stroke-width="2" stroke-linecap="round"/></svg>
<div class="a" style="left:137px;top:627px;font-size:14px;color:#6b7280;line-height:17px">Type to search</div>
<div class="a" style="left:1731.5px;top:616px;width:145.5px;height:38.5px;border-radius:5px;background:#fff;border:1px solid #d9dee5"></div>
<svg class="a" style="left:1757px;top:623px" width="20" height="20"><g stroke="#6b6f75" stroke-width="1.5" fill="none"><rect x="1.8" y="1.8" width="6.8" height="4.6" rx="1"/><rect x="11.6" y="1.8" width="6.8" height="8.2" rx="1"/><rect x="1.8" y="9.6" width="6.8" height="8.6" rx="1"/><rect x="11.6" y="13.4" width="6.8" height="4.8" rx="1"/></g></svg>
<div class="a" style="left:1789px;top:626px;font-size:15px;color:#3b4350;line-height:18px;letter-spacing:.25px;-webkit-text-stroke:.45px #3b4350">Columns</div>
<div class="a" style="left:89px;top:660px;width:1788px;height:50px;background:linear-gradient(#f1f5f9 0,#f1f5f9 72%,#e9edf1 100%)"></div>
<div class="a" style="left:89px;top:710px;width:1788px;height:300px;background:#fff"></div>
<div class="a" style="left:123px;top:680px;font-size:12px;font-weight:bold;letter-spacing:0.8px;color:#1f2430;line-height:14px;white-space:nowrap">CAMPAIGN</div>
<svg class="a" style="left:199px;top:679px" width="14" height="14" viewBox="0 0 14 14"><path d="M4 2 V12 M1.5 9.5 L4 12 L6.5 9.5 M10 12 V2 M7.5 4.5 L10 2 L12.5 4.5" stroke="#9ca3af" stroke-width="1.1" fill="none"/></svg>
<div class="a" style="left:292px;top:680px;font-size:12px;font-weight:bold;letter-spacing:0.8px;color:#1f2430;line-height:14px;white-space:nowrap">STATUS</div>
<svg class="a" style="left:348px;top:679px" width="14" height="14" viewBox="0 0 14 14"><path d="M4 2 V12 M1.5 9.5 L4 12 L6.5 9.5 M10 12 V2 M7.5 4.5 L10 2 L12.5 4.5" stroke="#9ca3af" stroke-width="1.1" fill="none"/></svg>
<div class="a" style="left:414.5px;top:680px;font-size:12px;font-weight:bold;letter-spacing:0.8px;color:#1f2430;line-height:14px;white-space:nowrap">CLICKS</div>
<div class="a" style="left:533.4px;top:680px;font-size:12px;font-weight:bold;letter-spacing:0.8px;color:#1f2430;line-height:14px;white-space:nowrap">COST</div>
<svg class="a" style="left:574px;top:679px" width="14" height="14" viewBox="0 0 14 14"><path d="M4 2 V12 M1.5 9.5 L4 12 L6.5 9.5 M10 12 V2 M7.5 4.5 L10 2 L12.5 4.5" stroke="#9ca3af" stroke-width="1.1" fill="none"/></svg>
<div class="a" style="left:640.3px;top:680px;font-size:12px;font-weight:bold;letter-spacing:0.8px;color:#1f2430;line-height:14px;white-space:nowrap">REVENUE</div>
<svg class="a" style="left:706px;top:679px" width="14" height="14" viewBox="0 0 14 14"><path d="M4 2 V12 M1.5 9.5 L4 12 L6.5 9.5 M10 12 V2 M7.5 4.5 L10 2 L12.5 4.5" stroke="#9ca3af" stroke-width="1.1" fill="none"/></svg>
<div class="a" style="left:772.3px;top:680px;font-size:12px;font-weight:bold;letter-spacing:0.8px;color:#1f2430;line-height:14px;white-space:nowrap">ROI %</div>
<svg class="a" style="left:813px;top:679px" width="14" height="14" viewBox="0 0 14 14"><path d="M4 2 V12 M1.5 9.5 L4 12 L6.5 9.5 M10 12 V2 M7.5 4.5 L10 2 L12.5 4.5" stroke="#9ca3af" stroke-width="1.1" fill="none"/></svg>
<div class="a" style="left:891.8px;top:680px;font-size:12px;font-weight:bold;letter-spacing:0.8px;color:#1f2430;line-height:14px;white-space:nowrap">CPC</div>
<svg class="a" style="left:923px;top:679px" width="14" height="14" viewBox="0 0 14 14"><path d="M4 2 V12 M1.5 9.5 L4 12 L6.5 9.5 M10 12 V2 M7.5 4.5 L10 2 L12.5 4.5" stroke="#9ca3af" stroke-width="1.1" fill="none"/></svg>
<div class="a" style="left:989.8px;top:680px;font-size:12px;font-weight:bold;letter-spacing:0.8px;color:#1f2430;line-height:14px;white-space:nowrap">CTR</div>
<svg class="a" style="left:1021px;top:679px" width="14" height="14" viewBox="0 0 14 14"><path d="M4 2 V12 M1.5 9.5 L4 12 L6.5 9.5 M10 12 V2 M7.5 4.5 L10 2 L12.5 4.5" stroke="#9ca3af" stroke-width="1.1" fill="none"/></svg>
<div class="a" style="left:1086.7px;top:680px;font-size:12px;font-weight:bold;letter-spacing:0.8px;color:#1f2430;line-height:14px;white-space:nowrap">SALES</div>
<svg class="a" style="left:1134px;top:679px" width="14" height="14" viewBox="0 0 14 14"><path d="M4 2 V12 M1.5 9.5 L4 12 L6.5 9.5 M10 12 V2 M7.5 4.5 L10 2 L12.5 4.5" stroke="#9ca3af" stroke-width="1.1" fill="none"/></svg>
<div class="a" style="left:1200.3px;top:680px;font-size:12px;font-weight:bold;letter-spacing:0.8px;color:#1f2430;line-height:14px;white-space:nowrap">CPS</div>
<svg class="a" style="left:1244px;top:679px" width="14" height="14" viewBox="0 0 14 14"><path d="M4 2 V12 M1.5 9.5 L4 12 L6.5 9.5 M10 12 V2 M7.5 4.5 L10 2 L12.5 4.5" stroke="#9ca3af" stroke-width="1.1" fill="none"/></svg>
<div class="a" style="left:1311.4px;top:680px;font-size:12px;font-weight:bold;letter-spacing:0.8px;color:#1f2430;line-height:14px;white-space:nowrap">LEADS</div>
<svg class="a" style="left:1359px;top:679px" width="14" height="14" viewBox="0 0 14 14"><path d="M4 2 V12 M1.5 9.5 L4 12 L6.5 9.5 M10 12 V2 M7.5 4.5 L10 2 L12.5 4.5" stroke="#9ca3af" stroke-width="1.1" fill="none"/></svg>
<div class="a" style="left:1424.4px;top:680px;font-size:12px;font-weight:bold;letter-spacing:0.8px;color:#1f2430;line-height:14px;white-space:nowrap">CPL</div>
<svg class="a" style="left:1469.5px;top:679px" width="14" height="14" viewBox="0 0 14 14"><path d="M4 2 V12 M1.5 9.5 L4 12 L6.5 9.5 M10 12 V2 M7.5 4.5 L10 2 L12.5 4.5" stroke="#9ca3af" stroke-width="1.1" fill="none"/></svg>
<div class="a" style="left:1535px;top:680px;font-size:12px;font-weight:bold;letter-spacing:0.8px;color:#1f2430;line-height:14px;white-space:nowrap">IMPRESSIONS</div>
<svg class="a" style="left:1632.5px;top:679px" width="14" height="14" viewBox="0 0 14 14"><path d="M4 2 V12 M1.5 9.5 L4 12 L6.5 9.5 M10 12 V2 M7.5 4.5 L10 2 L12.5 4.5" stroke="#9ca3af" stroke-width="1.1" fill="none"/></svg>
<div class="a" style="left:1698px;top:680px;font-size:12px;font-weight:bold;letter-spacing:0.6px;color:#1f2430;line-height:14px;white-space:nowrap">AVERAGE REVENUE</div>
<svg class="a" style="left:1830.7px;top:679px" width="14" height="14" viewBox="0 0 14 14"><path d="M4 2 V12 M1.5 9.5 L4 12 L6.5 9.5 M10 12 V2 M7.5 4.5 L10 2 L12.5 4.5" stroke="#9ca3af" stroke-width="1.1" fill="none"/></svg>
<svg class="a" style="left:469px;top:682px" width="10" height="8"><path d="M0 0 H10 L5 7 Z" fill="#1f2430"/></svg>
<div class="a" style="left:1227.0px;top:680px;width:13px;height:13px;border-radius:50%;background:#1f2430;color:#fff;font-size:10px;font-weight:bold;text-align:center;line-height:13px">?</div>
<div class="a" style="left:1450.7px;top:680px;width:13px;height:13px;border-radius:50%;background:#1f2430;color:#fff;font-size:10px;font-weight:bold;text-align:center;line-height:13px">?</div>
<div class="a" style="left:123px;top:719.0px;font-size:15px;color:#213e96;line-height:20px;text-decoration:underline;text-decoration-thickness:1.4px;text-underline-offset:2px;letter-spacing:.3px;-webkit-text-stroke:.6px #213e96">Lawn Space<br>Gardening</div>
<svg class="a" style="left:297.4px;top:731.0px" width="24" height="16" viewBox="0 0 24 16"><path d="M4.5 1.8 Q.8 8 4.5 14.2 M7.8 4 Q5.6 8 7.8 12 M19.5 1.8 Q23.2 8 19.5 14.2 M16.2 4 Q18.4 8 16.2 12" stroke="#34c98e" stroke-width="1.9" fill="none" stroke-linecap="round"/><path d="M10.3 4.8 Q10.3 4 11 4.3 L15 7.2 Q15.8 8 15 8.8 L11 11.7 Q10.3 12 10.3 11.2 Z" fill="#34c98e" stroke="#34c98e" stroke-width="1.2" stroke-linejoin="round"/></svg>
<div class="a" style="left:422px;top:730.0px;font-size:15px;color:#3f3f46;line-height:18px;white-space:nowrap">5,010</div>
<div class="a" style="left:541.5px;top:730.0px;font-size:15px;color:#3f3f46;line-height:18px;white-space:nowrap">$210.41</div>
<div class="a" style="left:647.5px;top:730.0px;font-size:15px;color:#3f3f46;line-height:18px;white-space:nowrap">$2,917.00</div>
<div class="a" style="left:780px;top:730.0px;font-size:15px;color:#3f3f46;line-height:18px;white-space:nowrap">1,386.34%</div>
<div class="a" style="left:899.5px;top:730.0px;font-size:15px;color:#3f3f46;line-height:18px;white-space:nowrap">$0.04</div>
<div class="a" style="left:997px;top:730.0px;font-size:15px;color:#3f3f46;line-height:18px;white-space:nowrap">0.00%</div>
<div class="a" style="left:1094.5px;top:730.0px;font-size:15px;color:#3f3f46;line-height:18px;white-space:nowrap">51</div>
<div class="a" style="left:1207px;top:730.0px;font-size:15px;color:#3f3f46;line-height:18px;white-space:nowrap">$4.13</div>
<div class="a" style="left:1318.5px;top:730.0px;font-size:15px;color:#3f3f46;line-height:18px;white-space:nowrap">114</div>
<div class="a" style="left:1431.5px;top:730.0px;font-size:15px;color:#3f3f46;line-height:18px;white-space:nowrap">$1.85</div>
<div class="a" style="left:1542.2px;top:730.0px;font-size:15px;color:#3f3f46;line-height:18px;white-space:nowrap">32188</div>
<div class="a" style="left:1705.2px;top:730.0px;font-size:15px;color:#3f3f46;line-height:18px;white-space:nowrap">$57.20</div>
<div class="a" style="left:89px;top:768px;width:1788px;height:1px;background:#e5e7eb"></div>
<div class="a" style="left:123px;top:777.0px;font-size:15px;color:#213e96;line-height:20px;text-decoration:underline;text-decoration-thickness:1.4px;text-underline-offset:2px;letter-spacing:.3px;-webkit-text-stroke:.6px #213e96">Furniture<br>Logistics</div>
<svg class="a" style="left:297.4px;top:789.0px" width="24" height="16" viewBox="0 0 24 16"><path d="M4.5 1.8 Q.8 8 4.5 14.2 M7.8 4 Q5.6 8 7.8 12 M19.5 1.8 Q23.2 8 19.5 14.2 M16.2 4 Q18.4 8 16.2 12" stroke="#34c98e" stroke-width="1.9" fill="none" stroke-linecap="round"/><path d="M10.3 4.8 Q10.3 4 11 4.3 L15 7.2 Q15.8 8 15 8.8 L11 11.7 Q10.3 12 10.3 11.2 Z" fill="#34c98e" stroke="#34c98e" stroke-width="1.2" stroke-linejoin="round"/></svg>
<div class="a" style="left:422px;top:788.0px;font-size:15px;color:#3f3f46;line-height:18px;white-space:nowrap">4,833</div>
<div class="a" style="left:541.5px;top:788.0px;font-size:15px;color:#3f3f46;line-height:18px;white-space:nowrap">$581.97</div>
<div class="a" style="left:647.5px;top:788.0px;font-size:15px;color:#3f3f46;line-height:18px;white-space:nowrap">$3,015.00</div>
<div class="a" style="left:780px;top:788.0px;font-size:15px;color:#3f3f46;line-height:18px;white-space:nowrap">518.07%</div>
<div class="a" style="left:899.5px;top:788.0px;font-size:15px;color:#3f3f46;line-height:18px;white-space:nowrap">$0.12</div>
<div class="a" style="left:997px;top:788.0px;font-size:15px;color:#3f3f46;line-height:18px;white-space:nowrap">0.00%</div>
<div class="a" style="left:1094.5px;top:788.0px;font-size:15px;color:#3f3f46;line-height:18px;white-space:nowrap">57</div>
<div class="a" style="left:1207px;top:788.0px;font-size:15px;color:#3f3f46;line-height:18px;white-space:nowrap">$10.21</div>
<div class="a" style="left:1318.5px;top:788.0px;font-size:15px;color:#3f3f46;line-height:18px;white-space:nowrap">102</div>
<div class="a" style="left:1431.5px;top:788.0px;font-size:15px;color:#3f3f46;line-height:18px;white-space:nowrap">$5.71</div>
<div class="a" style="left:1542.2px;top:788.0px;font-size:15px;color:#3f3f46;line-height:18px;white-space:nowrap">29646</div>
<div class="a" style="left:1705.2px;top:788.0px;font-size:15px;color:#3f3f46;line-height:18px;white-space:nowrap">$52.89</div>
<div class="a" style="left:89px;top:826px;width:1788px;height:1px;background:#e5e7eb"></div>
<div class="a" style="left:123px;top:835.5px;font-size:15px;color:#213e96;line-height:20px;text-decoration:underline;text-decoration-thickness:1.4px;text-underline-offset:2px;letter-spacing:.3px;-webkit-text-stroke:.6px #213e96">Interior Design:<br>High-end<br>Residential</div>
<svg class="a" style="left:297.4px;top:857.5px" width="24" height="16" viewBox="0 0 24 16"><path d="M4.5 1.8 Q.8 8 4.5 14.2 M7.8 4 Q5.6 8 7.8 12 M19.5 1.8 Q23.2 8 19.5 14.2 M16.2 4 Q18.4 8 16.2 12" stroke="#34c98e" stroke-width="1.9" fill="none" stroke-linecap="round"/><path d="M10.3 4.8 Q10.3 4 11 4.3 L15 7.2 Q15.8 8 15 8.8 L11 11.7 Q10.3 12 10.3 11.2 Z" fill="#34c98e" stroke="#34c98e" stroke-width="1.2" stroke-linejoin="round"/></svg>
<div class="a" style="left:422px;top:856.5px;font-size:15px;color:#3f3f46;line-height:18px;white-space:nowrap">3,852</div>
<div class="a" style="left:541.5px;top:856.5px;font-size:15px;color:#3f3f46;line-height:18px;white-space:nowrap">$627.00</div>
<div class="a" style="left:647.5px;top:856.5px;font-size:15px;color:#3f3f46;line-height:18px;white-space:nowrap">$2,889.00</div>
<div class="a" style="left:780px;top:856.5px;font-size:15px;color:#3f3f46;line-height:18px;white-space:nowrap">460.77%</div>
<div class="a" style="left:899.5px;top:856.5px;font-size:15px;color:#3f3f46;line-height:18px;white-space:nowrap">$0.16</div>
<div class="a" style="left:997px;top:856.5px;font-size:15px;color:#3f3f46;line-height:18px;white-space:nowrap">0.00%</div>
<div class="a" style="left:1094.5px;top:856.5px;font-size:15px;color:#3f3f46;line-height:18px;white-space:nowrap">72</div>
<div class="a" style="left:1207px;top:856.5px;font-size:15px;color:#3f3f46;line-height:18px;white-space:nowrap">$8.71</div>
<div class="a" style="left:1318.5px;top:856.5px;font-size:15px;color:#3f3f46;line-height:18px;white-space:nowrap">75</div>
<div class="a" style="left:1431.5px;top:856.5px;font-size:15px;color:#3f3f46;line-height:18px;white-space:nowrap">$8.36</div>
<div class="a" style="left:1542.2px;top:856.5px;font-size:15px;color:#3f3f46;line-height:18px;white-space:nowrap">43777</div>
<div class="a" style="left:1705.2px;top:856.5px;font-size:15px;color:#3f3f46;line-height:18px;white-space:nowrap">$40.13</div>
<div class="a" style="left:89px;top:905px;width:1788px;height:1px;background:#e5e7eb"></div>
<div class="a" style="left:123px;top:915.0px;font-size:15px;color:#213e96;line-height:20px;text-decoration:underline;text-decoration-thickness:1.4px;text-underline-offset:2px;letter-spacing:.3px;-webkit-text-stroke:.6px #213e96">Interior Design:<br>Miami</div>
<svg class="a" style="left:299px;top:924px" width="22" height="22"><circle cx="11" cy="11" r="9.3" stroke="#f08a3c" stroke-width="1.9" fill="none"/><path d="M8.7 7.6 V14.4 M13.3 7.6 V14.4" stroke="#f08a3c" stroke-width="2.6" stroke-linecap="round"/></svg>
<div class="a" style="left:422px;top:926px;font-size:15px;color:#3f3f46;line-height:18px;white-space:nowrap">3,818</div>
<div class="a" style="left:541.5px;top:926px;font-size:15px;color:#3f3f46;line-height:18px;white-space:nowrap">$195.03</div>
<div class="a" style="left:647.5px;top:926px;font-size:15px;color:#3f3f46;line-height:18px;white-space:nowrap">$3,157.00</div>
<div class="a" style="left:780px;top:926px;font-size:15px;color:#3f3f46;line-height:18px;white-space:nowrap">1,618.73%</div>
<div class="a" style="left:899.5px;top:926px;font-size:15px;color:#3f3f46;line-height:18px;white-space:nowrap">$0.05</div>
<div class="a" style="left:997px;top:926px;font-size:15px;color:#3f3f46;line-height:18px;white-space:nowrap">0.00%</div>
<div class="a" style="left:1094.5px;top:926px;font-size:15px;color:#3f3f46;line-height:18px;white-space:nowrap">91</div>
<div class="a" style="left:1207px;top:926px;font-size:15px;color:#3f3f46;line-height:18px;white-space:nowrap">$2.14</div>
<div class="a" style="left:1318.5px;top:926px;font-size:15px;color:#3f3f46;line-height:18px;white-space:nowrap">70</div>
<div class="a" style="left:1431.5px;top:926px;font-size:15px;color:#3f3f46;line-height:18px;white-space:nowrap">$2.79</div>
<div class="a" style="left:1542.2px;top:926px;font-size:15px;color:#3f3f46;line-height:18px;white-space:nowrap">35827</div>
<div class="a" style="left:1705.2px;top:926px;font-size:15px;color:#3f3f46;line-height:18px;white-space:nowrap">$34.69</div>
<div class="a" style="left:1905px;top:133px;width:15px;height:813px;background:#f8f8f8"></div>
<svg class="a" style="left:1907px;top:137px" width="11" height="8"><path d="M1 7 L5.5 1.5 L10 7 Z" fill="#808080"/></svg>
<div class="a" style="left:1908px;top:233px;width:9px;height:569px;border-radius:5px;background:#858585"></div>
<svg class="a" style="left:1907px;top:934px" width="11" height="8"><path d="M1 1 L5.5 6.5 L10 1 Z" fill="#808080"/></svg>
<div class="a" style="left:1887px;top:839px;width:24px;height:24px;border-radius:50%;background:#fff"></div>
<svg class="a" style="left:1893px;top:845px" width="12" height="12"><path d="M1.5 1.5 L10.5 10.5 M10.5 1.5 L1.5 10.5" stroke="#555b63" stroke-width="1.3"/></svg>
<div class="a" style="left:1845.5px;top:865.5px;width:52px;height:52px;border-radius:50%;background:#0b3ba8"></div>
<div class="a" style="left:1848px;top:868px;width:47px;height:47px;border-radius:50%;border:1.6px solid #fff"></div>
<svg class="a" style="left:1856.5px;top:876.5px" width="30" height="30" viewBox="0 0 30 30"><rect x="2.5" y="3" width="25" height="19.5" rx="1" stroke="#fff" stroke-width="1.3" fill="none"/><path d="M2.5 6.5 H27.5" stroke="#fff" stroke-width="1.1"/><path d="M4.5 4.8 H5.5 M6.8 4.8 H7.8 M9.1 4.8 H10.1" stroke="#fff" stroke-width="1"/><path d="M5 10 H10 M5 12.5 H8 M20 10 H25 M22 12.5 H25" stroke="#fff" stroke-width="1.2"/><path d="M15 8.5 Q18.5 11.5 18 20 H12 Q11.5 11.5 15 8.5 Z" stroke="#fff" stroke-width="1.3" fill="#0b3ba8"/><circle cx="15" cy="14.5" r="1.3" stroke="#fff" stroke-width="1" fill="none"/><path d="M12 16.5 L10 19.5 V21 H12.5 M18 16.5 L20 19.5 V21 H17.5" stroke="#fff" stroke-width="1.2" fill="#0b3ba8"/><path d="M14.2 22.5 V26 M16 22.5 V24.5" stroke="#fff" stroke-width="1.1"/></svg>
</div>
</body></html>
